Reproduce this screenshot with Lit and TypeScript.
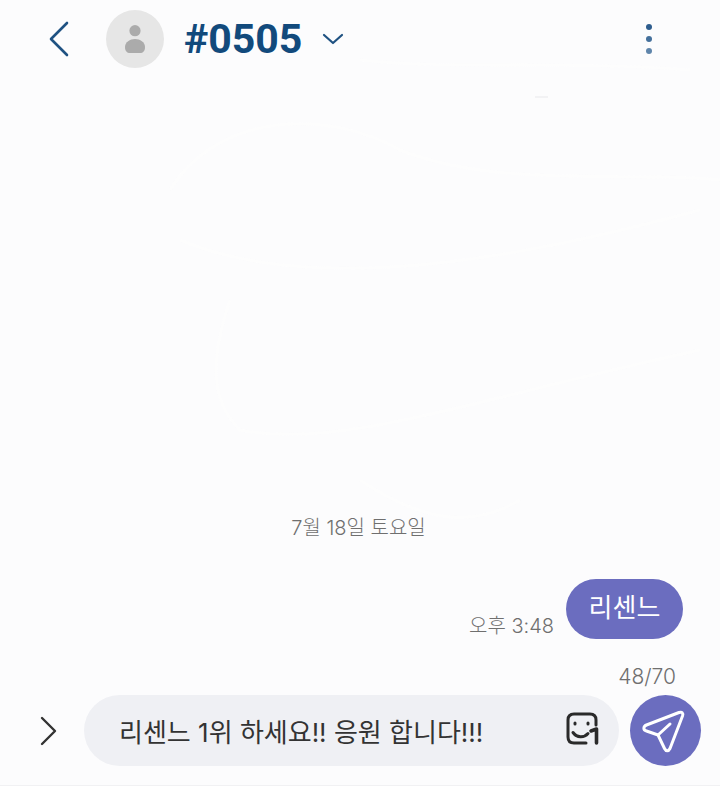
import { LitElement, html, css } from 'lit';
import { customElement } from 'lit/decorators.js';

@customElement('app-root')
export class AppRoot extends LitElement {
  static styles = css`
    :host {
      display: block;
      height: 786px;
      overflow: hidden;
      background: #fcfcfd;
      font-family: Inter, 'Noto Sans CJK KR', sans-serif;
    }

    .screen {
      position: relative;
      height: 786px;
      box-sizing: border-box;
      display: flex;
      flex-direction: column;
      border-bottom: 1px solid #f1f1f3;
    }

    /* faint wallpaper strokes behind the thread */
    .wallpaper {
      position: absolute;
      left: 0;
      top: 0;
      width: 720px;
      height: 786px;
      pointer-events: none;
    }

    .header,
    .thread,
    .composer {
      position: relative;
    }

    .header {
      height: 78px;
      flex: none;
      display: flex;
      align-items: center;
      padding-left: 48px;
    }

    .back {
      width: 22px;
      height: 36px;
      margin-right: 36px;
    }

    .avatar {
      width: 58px;
      height: 58px;
      border-radius: 50%;
      background: #e6e6e6;
      display: flex;
      align-items: center;
      justify-content: center;
      margin-right: 20px;
    }

    .title {
      font-family: Roboto, sans-serif;
      font-size: 41px;
      font-weight: 700;
      color: #124a7c;
      line-height: 44px;
      margin-right: 20px;
    }

    .caret {
      width: 22px;
      height: 12px;
    }

    .dots {
      margin-left: auto;
      margin-right: 68px;
      display: flex;
      flex-direction: column;
      gap: 5.7px;
    }

    .dots span {
      width: 6px;
      height: 6px;
      border-radius: 50%;
      background: #2e5d8e;
    }

    .dots span:nth-child(2) {
      background: #44709c;
    }

    .dots span:nth-child(3) {
      background: #5f85ab;
    }

    .thread {
      flex: 1;
      display: flex;
      flex-direction: column;
      justify-content: flex-end;
      padding-right: 37px;
    }

    .date {
      text-align: center;
      font-size: 20px;
      font-weight: 300;
      line-height: 26px;
      color: #6f6f6f;
      margin: 0 0 38px 34px;
    }

    .message {
      display: flex;
      justify-content: flex-end;
      align-items: flex-end;
      gap: 12px;
    }

    .time {
      font-size: 20px;
      font-weight: 300;
      line-height: 26px;
      color: #6f6f6f;
    }

    .bubble {
      height: 60px;
      width: 117px;
      border-radius: 30px;
      background: #6b6dbf;
      color: #fff;
      font-size: 26px;
      line-height: 58px;
      display: flex;
      align-items: flex-start;
      justify-content: center;
    }

    .counter {
      text-align: right;
      font-size: 21px;
      font-weight: 300;
      line-height: 24px;
      color: #6f6f6f;
      margin: 26px 7px 6px 0;
    }

    .composer {
      flex: none;
      display: flex;
      align-items: center;
      padding: 0 19px 19px 40px;
    }

    .expand {
      width: 18px;
      height: 30px;
      margin-right: 26px;
    }

    .input {
      flex: 1;
      height: 71px;
      border-radius: 36px;
      background: #eff0f4;
      display: flex;
      align-items: center;
      padding: 0 20px 0 35px;
      margin-right: 11px;
      font-size: 26px;
      color: #333;
    }

    .text {
      flex: 1;
    }

    .sticker {
      width: 34px;
      height: 34px;
      margin-bottom: 4px;
    }

    .send {
      width: 71px;
      height: 71px;
      border-radius: 50%;
      background: #6b6dbf;
    }

    .send svg {
      display: block;
      width: 71px;
      height: 71px;
    }
  `;

  render() {
    return html`
      <div class="screen">
        <svg class="wallpaper" viewBox="0 0 720 786" fill="none" stroke="#fefefe" stroke-width="3" stroke-opacity="0.6">
          <path d="M170 190 C220 110 330 110 400 150 C500 190 640 170 720 180" />
          <path d="M180 240 C300 290 480 270 700 210" />
          <path d="M230 300 C210 360 210 400 240 430 C340 450 470 400 700 350" />
          <path d="M360 60 C450 70 560 60 690 70" />
          <path d="M360 480 C420 520 470 530 520 500" />
          <path d="M535 97 H548" stroke="#efeff1" stroke-width="1.5" stroke-opacity="1" />
        </svg>

        <div class="header">
          <svg class="back" viewBox="0 0 22 36" fill="none" stroke="#1f5282" stroke-width="2.6" stroke-linecap="round" stroke-linejoin="round">
            <path d="M19 2 L3 18 L19 34" />
          </svg>
          <div class="avatar">
            <svg width="20" height="28" viewBox="0 0 20 28" fill="#ababab">
              <circle cx="10" cy="5.7" r="5.6" />
              <path d="M0 22 C0 17 5 14 10 14 C15 14 20 17 20 22 C20 26 18 28 15 28 H5 C2 28 0 26 0 22 Z" />
            </svg>
          </div>
          <div class="title">#0505</div>
          <svg class="caret" viewBox="0 0 22 12" fill="none" stroke="#1f5282" stroke-width="2.2" stroke-linecap="round" stroke-linejoin="round">
            <path d="M2 2 L11 10 L20 2" />
          </svg>
          <div class="dots"><span></span><span></span><span></span></div>
        </div>

        <div class="thread">
          <div class="date">7월 18일 토요일</div>
          <div class="message">
            <span class="time">오후 3:48</span>
            <div class="bubble">리센느</div>
          </div>
          <div class="counter">48/70</div>
        </div>

        <div class="composer">
          <svg class="expand" viewBox="0 0 18 30" fill="none" stroke="#333" stroke-width="2.4" stroke-linecap="round" stroke-linejoin="round">
            <path d="M2 2 L15 15 L2 28" />
          </svg>
          <div class="input">
            <span class="text">리센느 1위 하세요!! 응원 합니다!!!</span>
            <svg class="sticker" viewBox="0 0 34 34" fill="none" stroke="#2a2a2a" stroke-width="3" stroke-linecap="round" stroke-linejoin="round">
              <path d="M21 31 H9 C5 31 3 29 3 25 V8 C3 4 5 2 9 2 H25 C29 2 31 4 31 8 V13" />
              <path d="M8 20.5 C12 26 19 26 23 21.5" />
              <path d="M10 11 V12" />
              <path d="M23 11 V12" />
              <path d="M26 19 L31.5 17 V31" stroke-width="3.6" />
            </svg>
          </div>
          <div class="send">
            <svg viewBox="0 0 71 71" fill="none" stroke="#fff" stroke-width="3" stroke-linecap="round" stroke-linejoin="round">
              <path d="M16.5 36 L28 40 L34.5 53.5 C36 56.5 38.5 56.5 40 53.5 L52.5 21 C53.5 18 52 16.5 49 17.5 L16.5 30 C13 31.5 13 35 16.5 36 Z" />
              <path d="M28 40 L40 29" />
            </svg>
          </div>
        </div>
      </div>
    `;
  }
}
